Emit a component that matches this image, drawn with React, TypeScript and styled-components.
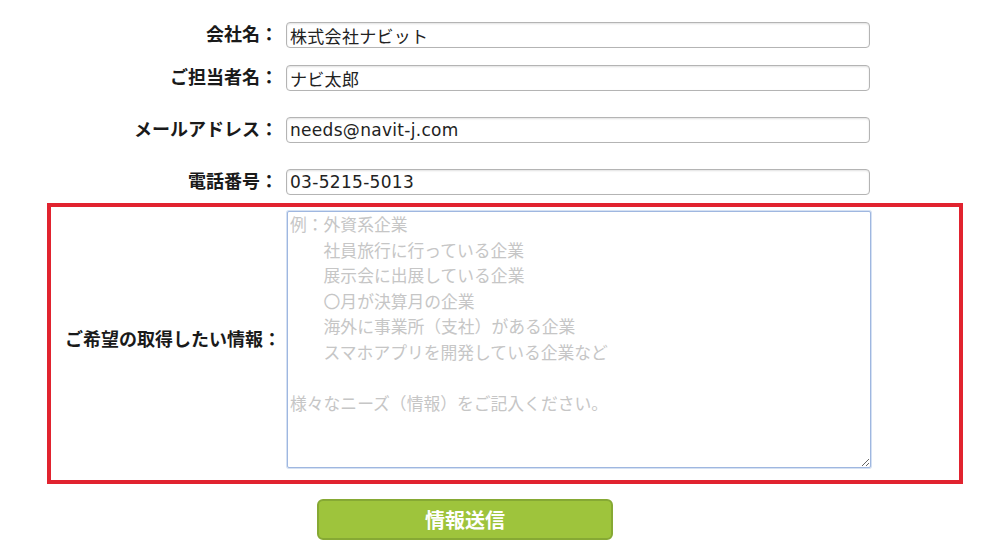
import React from 'react';
import styled, { createGlobalStyle } from 'styled-components';

const GlobalStyle = createGlobalStyle`
  body {
    margin: 0;
    background: #ffffff;
    font-family: 'DejaVu Sans', 'Noto Sans CJK JP', sans-serif;
    color: #222222;
  }
`;

const SForm = styled.form`
  width: 1000px;
  padding-top: 22px;
  display: flex;
  flex-direction: column;
`;

interface IRowStyle {
  gapAfter?: number;
}

const SRow = styled.div<IRowStyle>`
  display: grid;
  grid-template-columns: 278px 584px;
  column-gap: 8px;
  align-items: center;
  margin-bottom: ${({ gapAfter }) => (gapAfter !== undefined ? gapAfter : 17)}px;
`;

const SHighlight = styled.div`
  display: grid;
  grid-template-columns: 230px 584px;
  column-gap: 6px;
  align-items: center;
  margin-left: 47px;
  width: 916px;
  box-sizing: border-box;
  border: 4px solid #e1232f;
  padding: 4px 0 12px;
`;

const SLabel = styled.label`
  text-align: right;
  font-family: 'Noto Sans CJK JP', sans-serif;
  font-weight: bold;
  font-size: 18px;
  line-height: 26px;
  margin-top: -4px;
  color: #1a1a1a;
  white-space: nowrap;
`;

const SInput = styled.input`
  box-sizing: border-box;
  width: 584px;
  height: 26px;
  margin: 0;
  padding: 0 3px;
  border: 1px solid #b4b4b4;
  border-radius: 4px;
  box-shadow: inset 0 1px 2px rgba(0, 0, 0, 0.12);
  font-family: 'DejaVu Sans', 'Noto Sans CJK JP', sans-serif;
  font-size: 17px;
  letter-spacing: 0.3px;
  color: #222222;
  outline: none;
`;

const STextarea = styled.textarea`
  box-sizing: border-box;
  width: 584px;
  height: 257px;
  margin: 0;
  padding: 0 2px;
  border: 1px solid #9fb7e0;
  box-shadow: 0 0 0 1px #d5e1f3;
  border-radius: 2px;
  font-family: 'Noto Sans CJK JP', sans-serif;
  font-size: 16.8px;
  line-height: 25.5px;
  color: #222222;
  outline: none;
  resize: both;
  &::placeholder {
    color: #c6c6c6;
  }
`;

const SButtonRow = styled.div`
  display: flex;
  padding: 15px 0 0 317px;
`;

const SButton = styled.button`
  width: 296px;
  height: 41px;
  padding: 0;
  background: #9ec43c;
  border: 2px solid #86a934;
  border-radius: 6px;
  color: #ffffff;
  font-family: 'Noto Sans CJK JP', sans-serif;
  font-weight: bold;
  font-size: 20px;
  cursor: pointer;
`;

const PLACEHOLDER = [
  '例：外資系企業',
  '　　社員旅行に行っている企業',
  '　　展示会に出展している企業',
  '　　〇月が決算月の企業',
  '　　海外に事業所（支社）がある企業',
  '　　スマホアプリを開発している企業など',
  '',
  '様々なニーズ（情報）をご記入ください。',
].join('\n');

const App = () => (
  <>
    <GlobalStyle />
    <SForm onSubmit={e => e.preventDefault()}>
      <SRow>
        <SLabel>会社名：</SLabel>
        <SInput defaultValue="株式会社ナビット" />
      </SRow>
      <SRow gapAfter={26}>
        <SLabel>ご担当者名：</SLabel>
        <SInput defaultValue="ナビ太郎" />
      </SRow>
      <SRow gapAfter={26}>
        <SLabel>メールアドレス：</SLabel>
        <SInput defaultValue="needs@navit-j.com" />
      </SRow>
      <SRow gapAfter={8}>
        <SLabel>電話番号：</SLabel>
        <SInput defaultValue="03-5215-5013" />
      </SRow>
      <SHighlight>
        <SLabel>ご希望の取得したい情報：</SLabel>
        <STextarea placeholder={PLACEHOLDER} />
      </SHighlight>
      <SButtonRow>
        <SButton type="submit">情報送信</SButton>
      </SButtonRow>
    </SForm>
  </>
);

export default App;
